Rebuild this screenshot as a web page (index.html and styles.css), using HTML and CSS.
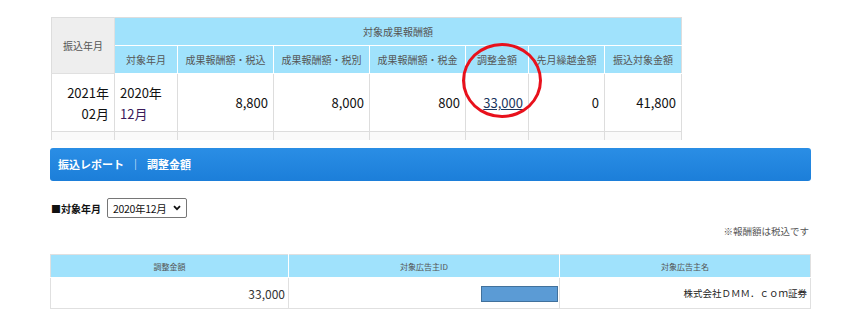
FILE: index.html
```html
<!DOCTYPE html>
<html lang="ja">
<head>
<meta charset="utf-8">
<link rel="stylesheet" href="styles.css">
</head>
<body>
<div class="page">
  <div class="top-wrap">
    <table class="summary">
      <colgroup>
        <col class="c63"><col class="c63"><col class="c96"><col class="c96"><col class="c96"><col class="c63"><col class="c76"><col class="c77">
      </colgroup>
      <tr class="h1">
        <th rowspan="2" class="gray">振込年月</th>
        <th colspan="7">対象成果報酬額</th>
      </tr>
      <tr class="h2">
        <th>対象年月</th>
        <th>成果報酬額・税込</th>
        <th>成果報酬額・税別</th>
        <th>成果報酬額・税金</th>
        <th>調整金額</th>
        <th>先月繰越金額</th>
        <th>振込対象金額</th>
      </tr>
      <tr class="data">
        <td class="r">2021年<br>02月</td>
        <td class="l">2020年<br><span class="purple">12月</span></td>
        <td class="r">8,800</td>
        <td class="r">8,000</td>
        <td class="r">800</td>
        <td class="r"><a class="link">33,000</a></td>
        <td class="r">0</td>
        <td class="r">41,800</td>
      </tr>
      <tr class="tail">
        <td></td><td></td><td></td><td></td><td></td><td></td><td></td><td></td>
      </tr>
    </table>
    <div class="circle"></div>
  </div>

  <div class="bar">振込レポート<span class="sep">｜</span>調整金額</div>

  <div class="filter">
    <span class="label">■対象年月</span>
    <div class="select"><span class="val">2020年12月</span>
      <svg class="chev" width="8" height="6" viewBox="0 0 8 6"><path d="M1 1.2 L4 4.2 L7 1.2" fill="none" stroke="#111" stroke-width="1.8"/></svg>
    </div>
  </div>

  <div class="note">※報酬額は税込です</div>

  <table class="detail">
    <colgroup><col class="d1"><col class="d2"><col class="d3"></colgroup>
    <tr class="dh">
      <th>調整金額</th>
      <th>対象広告主ID</th>
      <th>対象広告主名</th>
    </tr>
    <tr class="dd">
      <td>33,000</td>
      <td><span class="mask"></span></td>
      <td class="name">株式会社ＤＭＭ．ｃｏｍ証券</td>
    </tr>
  </table>
</div>
</body>
</html>
```

FILE: styles.css
```css
* { box-sizing: border-box; }
html, body { margin: 0; padding: 0; background: #fff; }
body {
  font-family: Meiryo, "Noto Sans CJK JP", "Noto Sans", sans-serif;
  color: #111;
  width: 862px;
  height: 328px;
  overflow: hidden;
}
.page { padding-left: 50px; padding-top: 17px; }

.top-wrap { position: relative; width: 631px; margin-left: 1px; height: 123px; overflow: hidden; }
.summary {
  border-collapse: collapse;
  table-layout: fixed;
  width: 630px;
}
.c63 { width: 63px; }
.c96 { width: 96px; }
.c76 { width: 76px; }
.c77 { width: 77px; }
.summary th {
  background: #a0e2fc;
  color: #555;
  font-weight: normal;
  font-size: 10px;
  border: 1px solid #fff;
  padding: 0;
  white-space: nowrap;
}
.summary th.gray { background: #eeeeee; border-color: #e0e0e0; border-top-color: #ddd; border-left-color: #ddd; }
.summary tr.h1 th { border-top-color: #ddd; }
.summary tr.h1 th:last-child, .summary tr.h2 th:last-child { border-right-color: #ddd; }
.summary tr.h1 { height: 28px; }
.summary tr.h2 { height: 28px; }
.summary td {
  border: 1px solid #ddd;
  font-size: 13px;
  line-height: 21px;
  padding: 0 5px;
}
.summary tr.data { height: 58px; }
.summary tr.tail { height: 10px; }
.summary tr.tail td { background: #fafafa; }
.r { text-align: right; }
.l { text-align: left; }
.purple { color: #3a1a5a; }
.link { color: #1b365d; text-decoration: underline; }

.circle {
  position: absolute;
  left: 411px;
  top: 26px;
  width: 80px;
  height: 75px;
  border: 3px solid #e8111c;
  border-radius: 50%;
}

.bar {
  margin-top: 8px;
  width: 761px;
  height: 33px;
  border-radius: 3px;
  background: linear-gradient(#2a8ee5, #1c7ed9);
  color: #fff;
  font-weight: bold;
  font-size: 11px;
  line-height: 33px;
  padding-left: 8px;
}
.sep { display: inline-block; margin: 0 6px; font-weight: normal; }

.filter {
  display: flex;
  align-items: center;
  margin-top: 17px;
  height: 20px;
  margin-left: 1px;
}
.label { font-size: 10px; font-weight: bold; color: #111; width: 56px; white-space: nowrap; }
.select {
  width: 80px;
  height: 20px;
  border: 1px solid #767676;
  border-radius: 2px;
  font-size: 10.5px;
  padding-left: 5px;
  padding-right: 5px;
  display: flex;
  align-items: center;
  justify-content: space-between;
  color: #111;
  white-space: nowrap;
}
.val { letter-spacing: -0.3px; }

.note {
  width: 759px;
  text-align: right;
  font-size: 9.5px;
  color: #555;
  margin-top: 6px;
  line-height: 14px;
}

.detail {
  margin-top: 16px;
  border-collapse: collapse;
  table-layout: fixed;
  width: 760px;
}
.d1 { width: 238px; }
.d2 { width: 271px; }
.d3 { width: 251px; }
.detail th {
  background: #a0e2fc;
  color: #555;
  font-weight: normal;
  font-size: 8px;
  height: 23px;
  padding: 0;
  border: 1px solid #fff;
  border-top-color: #e0e0e0;
}
.detail th:first-child { border-left-color: #e0e0e0; }
.detail th:last-child { border-right-color: #e0e0e0; }
.detail td {
  border: 1px solid #e0e0e0;
  height: 31px;
  text-align: right;
  padding: 0 3px;
  font-size: 12px;
  color: #333;
}
.detail td.name { font-size: 9.5px; color: #222; }
.mask {
  display: inline-block;
  width: 77px;
  height: 16px;
  background: #5b9bd5;
  border: 1px solid #41719c;
  vertical-align: middle;
  margin-right: -2px;
}
```
